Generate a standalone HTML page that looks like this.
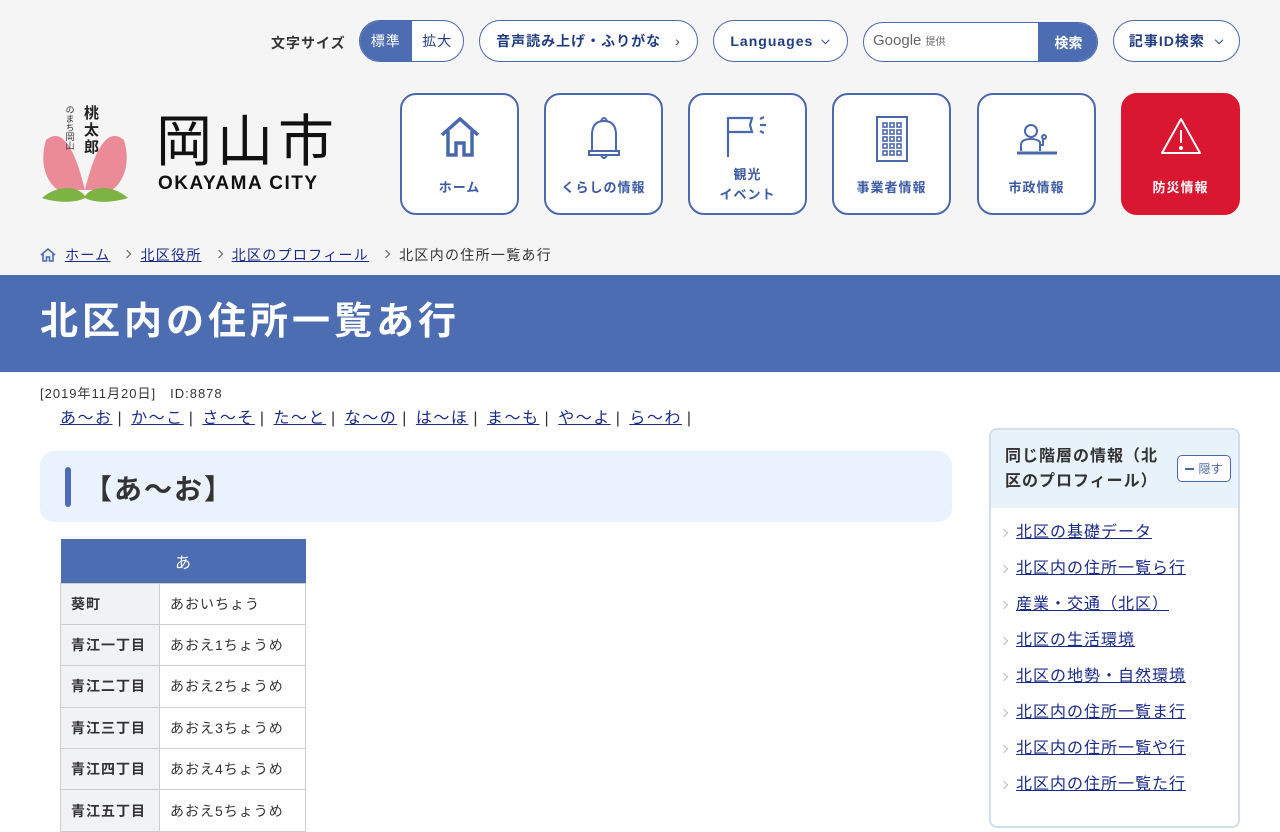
<!DOCTYPE html>
<html lang="ja"><head><meta charset="utf-8">
<style>
*{box-sizing:border-box;margin:0;padding:0}
body{width:1280px;height:800px;overflow:hidden;background:#fff;font-family:"Liberation Sans","Noto Sans CJK JP",sans-serif;color:#333;position:relative}
.hdr{position:absolute;left:0;top:0;width:1280px;height:275px;background:#f5f5f5}
.abs{position:absolute}
.pill{position:absolute;height:42px;border:1px solid #4a68ad;border-radius:21px;background:#fff;color:#1f3d80;font-weight:bold;font-size:14px;display:flex;align-items:center;justify-content:center;letter-spacing:1px}
.nav{position:absolute;top:93px;width:119px;height:122px;border:2px solid #4a68ad;border-radius:16px;background:#fff;color:#3c5ba3;font-size:13px;font-weight:bold;text-align:center;letter-spacing:1px}
.nav svg{position:absolute;left:50%;transform:translateX(-50%);top:20px}
.nav .t{position:absolute;left:0;right:0;top:82px}
a{color:#1a2b88;text-decoration:underline}
table{border-collapse:collapse;position:absolute;left:60px;top:539px;width:246px;font-size:14px}
th{background:#4d6db3;color:#fff;font-weight:normal;height:44px;font-size:16px}
td{border:1px solid #ccc;height:41.4px;padding-left:10px;letter-spacing:1px}
td.k{background:#f0f2f6;font-weight:bold;width:99px}
.side li{list-style:none;height:36px;font-size:16px;position:relative;padding-left:25px;line-height:20px}
.side li:before{content:"";position:absolute;left:10px;top:7px;width:5px;height:5px;border-top:1.5px solid #bbb;border-right:1.5px solid #bbb;transform:rotate(45deg)}
.sep{display:inline-block;width:6px;height:6px;border-top:1.5px solid #555;border-right:1.5px solid #555;transform:rotate(45deg);margin:0 10px 2px 14px}
.ln span.b{margin:0 8px 0 5px}
</style></head><body>
<div class="hdr"></div>
<div class="abs" style="left:271px;top:33px;font-size:14px;font-weight:bold;letter-spacing:1px">文字サイズ</div>
<div class="pill" style="left:359px;top:20px;width:105px;overflow:hidden;justify-content:flex-start">
 <span style="background:#4d6db3;color:#fff;width:52px;height:42px;display:flex;align-items:center;justify-content:center;font-weight:normal">標準</span>
 <span style="width:52px;text-align:center;font-weight:normal;color:#1f3d80">拡大</span></div>
<div class="pill" style="left:479px;top:20px;width:219px">音声読み上げ・ふりがな<span style="margin-left:14px;font-weight:normal">›</span></div>
<div class="pill" style="left:713px;top:20px;width:135px">Languages<span style="margin-left:8px;font-size:11px">⌵</span></div>
<div class="abs" style="left:863px;top:22px;width:235px;height:40px;border:1px solid #4a68ad;border-radius:20px;background:#fff;overflow:hidden">
 <span class="abs" style="left:9px;top:9px;font-size:15px;color:#666">Google <span style="font-size:10px">提供</span></span>
 <span class="abs" style="left:174px;top:0;width:61px;height:40px;background:#4d6db3;color:#fff;font-weight:bold;font-size:14px;display:flex;align-items:center;justify-content:center">検索</span></div>
<div class="pill" style="left:1113px;top:20px;width:127px">記事ID検索<span style="margin-left:10px;font-size:11px">⌵</span></div>

<!-- logo -->
<svg class="abs" style="left:38px;top:100px" width="95" height="105" viewBox="0 0 95 105">
<path d="M8 40 C20 30 34 36 47 90 C60 36 74 30 86 40 C92 60 88 80 74 90 L20 90 C6 80 2 60 8 40Z" fill="#eb8b97"/>
<path d="M4 98 C20 84 40 86 47 96 C54 86 74 84 90 98 C70 104 54 102 47 98 C40 102 22 104 4 98Z" fill="#7cb342"/>
<text x="46" y="18" font-size="15" font-weight="bold" fill="#222" font-family="Noto Sans CJK JP">桃</text>
<text x="46" y="35" font-size="15" font-weight="bold" fill="#222" font-family="Noto Sans CJK JP">太</text>
<text x="46" y="52" font-size="15" font-weight="bold" fill="#222" font-family="Noto Sans CJK JP">郎</text>
<text x="32" y="5" font-size="9" fill="#333" font-family="Noto Sans CJK JP" writing-mode="tb">のまち岡山</text>
</svg>
<div class="abs" style="left:156px;top:106px;font-size:56px;line-height:64px;letter-spacing:5px;color:#111;font-family:'Noto Sans CJK JP',sans-serif;font-weight:400">岡山市</div>
<div class="abs" style="left:158px;top:173px;font-size:19px;font-weight:bold;color:#111;letter-spacing:1.5px">OKAYAMA CITY</div>

<div class="nav" style="left:400px"><svg width="42" height="44" viewBox="0 0 42 44" fill="none" stroke="#4a68ad" stroke-width="3.5"><path d="M3 20 L21 4 L39 20"/><path d="M9 16 V40 H17 V28 H25 V40 H33 V16"/></svg><div class="t">ホーム</div></div>
<div class="nav" style="left:544px"><svg width="40" height="48" viewBox="0 0 40 48" fill="none" stroke="#4a68ad" stroke-width="2"><path d="M17 6 Q20 0 23 6"/><path d="M8 36 V20 Q8 6 20 6 Q32 6 32 20 V36"/><path d="M5 36 H35 V40 H5Z"/><path d="M17 40 Q20 46 23 40"/></svg><div class="t">くらしの情報</div></div>
<div class="nav" style="left:688px"><svg width="48" height="46" viewBox="0 0 48 46" fill="none" stroke="#4a68ad" stroke-width="2.2"><path d="M4 2 V42"/><path d="M4 3 H28 L26 10 L28 17 H4"/><path d="M36 4 L40 2 M36 10 H42 M36 16 L40 18"/></svg><div class="t" style="top:70px;line-height:20px">観光<br>イベント</div></div>
<div class="nav" style="left:832px"><svg width="36" height="50" viewBox="0 0 36 50" fill="none" stroke="#4a68ad" stroke-width="2"><rect x="3" y="2" width="30" height="44"/><g stroke-width="1.6"><rect x="9" y="8" width="4" height="4"/><rect x="16" y="8" width="4" height="4"/><rect x="23" y="8" width="4" height="4"/><rect x="9" y="15" width="4" height="4"/><rect x="16" y="15" width="4" height="4"/><rect x="23" y="15" width="4" height="4"/><rect x="9" y="22" width="4" height="4"/><rect x="16" y="22" width="4" height="4"/><rect x="23" y="22" width="4" height="4"/><rect x="9" y="29" width="4" height="4"/><rect x="16" y="29" width="4" height="4"/><rect x="23" y="29" width="4" height="4"/><rect x="9" y="36" width="4" height="4"/><rect x="16" y="36" width="4" height="4"/><rect x="23" y="36" width="4" height="4"/></g></svg><div class="t">事業者情報</div></div>
<div class="nav" style="left:977px"><svg width="44" height="44" viewBox="0 0 44 44" fill="none" stroke="#4a68ad" stroke-width="2"><circle cx="16" cy="16" r="6"/><path d="M6 36 V30 Q6 24 16 24 Q22 24 25 27 V36"/><circle cx="29" cy="22" r="2"/><path d="M28 24 V30 H25"/><path d="M2 38 H42" stroke-width="3"/></svg><div class="t">市政情報</div></div>
<div class="nav" style="left:1121px;background:#d91731;border-color:#d91731;color:#fff"><svg width="44" height="42" viewBox="0 0 44 42" fill="none" stroke="#fff" stroke-width="2"><path d="M22 4 L41 38 H3 Z" stroke-linejoin="round"/><path d="M22 15 V28"/><circle cx="22" cy="33" r="1" fill="#fff"/></svg><div class="t">防災情報</div></div>

<!-- breadcrumb -->
<div class="abs" style="left:40px;top:245px;font-size:14px;letter-spacing:1.3px;display:flex;align-items:center;white-space:nowrap">
<svg width="16" height="16" viewBox="0 0 16 16" fill="none" stroke="#4a68ad" stroke-width="1.6"><path d="M1 8 L8 2 L15 8"/><path d="M3 7 V14 H6.5 V10 H9.5 V14 H13 V7"/></svg>
<a style="margin-left:9px">ホーム</a><span class="sep"></span><a>北区役所</a><span class="sep"></span><a>北区のプロフィール</a><span class="sep"></span><span>北区内の住所一覧あ行</span></div>

<div class="abs" style="left:0;top:275px;width:1280px;height:97px;background:#4d6db3"></div>
<div class="abs" style="left:40px;top:296px;font-size:38px;color:#fff;font-weight:bold;letter-spacing:4px;line-height:52px">北区内の住所一覧あ行</div>

<div class="abs" style="left:40px;top:383px;font-size:13px;letter-spacing:1px">[2019年11月20日]　ID:8878</div>
<div class="abs ln" style="left:60px;top:404px;font-size:16px;letter-spacing:1.5px;color:#333;white-space:nowrap"><a>あ～お</a><span class="b">|</span><a>か～こ</a><span class="b">|</span><a>さ～そ</a><span class="b">|</span><a>た～と</a><span class="b">|</span><a>な～の</a><span class="b">|</span><a>は～ほ</a><span class="b">|</span><a>ま～も</a><span class="b">|</span><a>や～よ</a><span class="b">|</span><a>ら～わ</a><span class="b">|</span></div>

<div class="abs" style="left:40px;top:451px;width:912px;height:71px;background:#eaf2fd;border-radius:14px"></div>
<div class="abs" style="left:65px;top:467px;width:6px;height:40px;background:#4d6db3;border-radius:3px"></div>
<div class="abs" style="left:84px;top:468px;font-size:28px;font-weight:bold;letter-spacing:2px">【あ～お】</div>

<table>
<tr><th colspan="2">あ</th></tr>
<tr><td class="k">葵町</td><td>あおいちょう</td></tr>
<tr><td class="k">青江一丁目</td><td>あおえ1ちょうめ</td></tr>
<tr><td class="k">青江二丁目</td><td>あおえ2ちょうめ</td></tr>
<tr><td class="k">青江三丁目</td><td>あおえ3ちょうめ</td></tr>
<tr><td class="k">青江四丁目</td><td>あおえ4ちょうめ</td></tr>
<tr><td class="k">青江五丁目</td><td>あおえ5ちょうめ</td></tr>
</table>

<div class="abs side" style="left:989px;top:428px;width:251px;height:400px;border:2px solid #d3dcec;border-radius:8px;overflow:hidden;background:#fff">
 <div style="background:#e8f2fa;height:78px;position:relative">
  <div class="abs" style="left:14px;top:14px;font-size:16px;font-weight:bold;line-height:25px;width:165px;letter-spacing:1px">同じ階層の情報（北区のプロフィール）</div>
  <div class="abs" style="left:186px;top:25px;width:54px;height:27px;border:1px solid #4a68ad;border-radius:5px;background:#fff;font-size:12px;color:#4a68ad;display:flex;align-items:center;justify-content:center"><span style="display:inline-block;width:9px;height:2px;background:#4a68ad;margin-right:4px"></span>隠す</div>
 </div>
 <ul style="padding-top:15px;letter-spacing:1px">
 <li><a>北区の基礎データ</a></li>
 <li><a>北区内の住所一覧ら行</a></li>
 <li><a>産業・交通（北区）</a></li>
 <li><a>北区の生活環境</a></li>
 <li><a>北区の地勢・自然環境</a></li>
 <li><a>北区内の住所一覧ま行</a></li>
 <li><a>北区内の住所一覧や行</a></li>
 <li><a>北区内の住所一覧た行</a></li>
 </ul>
</div>
</body></html>
